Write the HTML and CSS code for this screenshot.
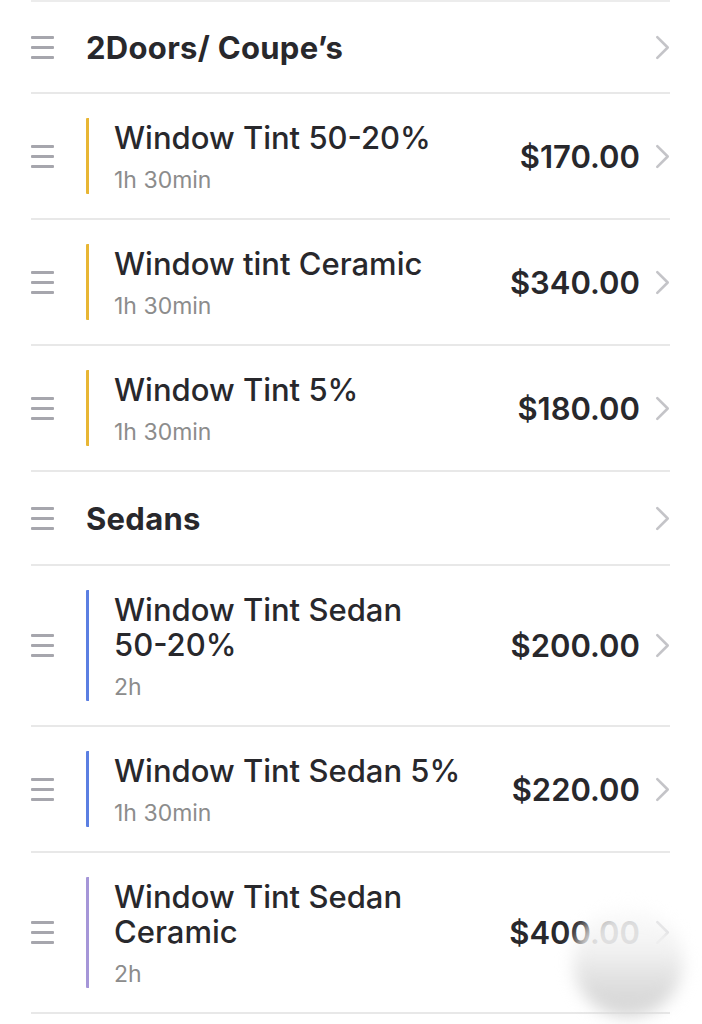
FILE: index.html
```html
<!DOCTYPE html>
<html>
<head>
<meta charset="utf-8">
<link rel="stylesheet" href="styles.css">
</head>
<body>
<div class="list">
  <div class="row cat">
    <span class="handle"><i></i><i></i><i></i></span>
    <div class="cat-title">2Doors/ Coupe’s</div>
    <svg class="chev" viewBox="0 0 14 24"><path d="M2 2 L12 12 L2 22"/></svg>
  </div>
  <div class="row svc">
    <span class="handle"><i></i><i></i><i></i></span>
    <div class="body yellow">
      <div class="name">Window Tint 50-20%</div>
      <div class="dur">1h 30min</div>
    </div>
    <div class="price">$170.00</div>
    <svg class="chev" viewBox="0 0 14 24"><path d="M2 2 L12 12 L2 22"/></svg>
  </div>
  <div class="row svc">
    <span class="handle"><i></i><i></i><i></i></span>
    <div class="body yellow">
      <div class="name">Window tint Ceramic</div>
      <div class="dur">1h 30min</div>
    </div>
    <div class="price">$340.00</div>
    <svg class="chev" viewBox="0 0 14 24"><path d="M2 2 L12 12 L2 22"/></svg>
  </div>
  <div class="row svc">
    <span class="handle"><i></i><i></i><i></i></span>
    <div class="body yellow">
      <div class="name">Window Tint 5%</div>
      <div class="dur">1h 30min</div>
    </div>
    <div class="price">$180.00</div>
    <svg class="chev" viewBox="0 0 14 24"><path d="M2 2 L12 12 L2 22"/></svg>
  </div>
  <div class="row cat">
    <span class="handle"><i></i><i></i><i></i></span>
    <div class="cat-title">Sedans</div>
    <svg class="chev" viewBox="0 0 14 24"><path d="M2 2 L12 12 L2 22"/></svg>
  </div>
  <div class="row svc">
    <span class="handle"><i></i><i></i><i></i></span>
    <div class="body blue">
      <div class="name">Window Tint Sedan<br>50-20%</div>
      <div class="dur">2h</div>
    </div>
    <div class="price">$200.00</div>
    <svg class="chev" viewBox="0 0 14 24"><path d="M2 2 L12 12 L2 22"/></svg>
  </div>
  <div class="row svc">
    <span class="handle"><i></i><i></i><i></i></span>
    <div class="body blue">
      <div class="name">Window Tint Sedan 5%</div>
      <div class="dur">1h 30min</div>
    </div>
    <div class="price">$220.00</div>
    <svg class="chev" viewBox="0 0 14 24"><path d="M2 2 L12 12 L2 22"/></svg>
  </div>
  <div class="row svc">
    <span class="handle"><i></i><i></i><i></i></span>
    <div class="body purple">
      <div class="name">Window Tint Sedan<br>Ceramic</div>
      <div class="dur">2h</div>
    </div>
    <div class="price">$400.00</div>
    <svg class="chev" viewBox="0 0 14 24"><path d="M2 2 L12 12 L2 22"/></svg>
  </div>
</div>
<div class="fab"></div>
</body>
</html>
```
FILE: styles.css
```css
* { box-sizing: border-box; }
html, body { margin: 0; padding: 0; background: #fff; }
body {
  font-family: "Inter", "Liberation Sans", sans-serif;
  color: #28282c;
  width: 702px;
  height: 1024px;
  overflow: hidden;
}
.list {
  margin: 0 32px 0 31px;
  border-top: 2px solid #ececec;
}
.row {
  display: flex;
  align-items: center;
  border-bottom: 2px solid #e8e8e8;
}
.cat { height: 94px; }
.cat:first-child { height: 92px; }
.handle {
  width: 23px;
  display: flex;
  flex-direction: column;
  gap: 7px;
  flex: none;
  margin-right: 32px;
}
.handle i {
  display: block;
  height: 3px;
  background: #a6a6ad;
  border-radius: 1px;
}
.cat-title {
  flex: 1;
  font-weight: 700;
  font-size: 31px;
  letter-spacing: 0.3px;
}
.chev {
  width: 15px;
  height: 25px;
  flex: none;
  margin-left: 15px;
}
.chev path {
  fill: none;
  stroke: #c4c4c8;
  stroke-width: 2.5;
  stroke-linecap: round;
  stroke-linejoin: round;
}
.svc { padding: 24px 0; }
.body {
  flex: 1;
  border-left: 3px solid #e8b634;
  border-radius: 1px;
  padding-left: 25px;
  display: flex;
  flex-direction: column;
  justify-content: center;
}
.body.blue { border-left-color: #5b7fe2; }
.body.purple { border-left-color: #a596d8; }
.name {
  font-size: 31px;
  line-height: 35px;
  font-weight: 500;
  padding-top: 2px;
}
.dur {
  font-size: 23px;
  line-height: 28px;
  color: #8c8c8c;
  margin-top: 11px;
}
.price {
  font-size: 31px;
  font-weight: 600;
  flex: none;
}
.fab {
  position: absolute;
  left: 573px;
  top: 907px;
  width: 110px;
  height: 110px;
  border-radius: 50%;
  background: linear-gradient(180deg,
    rgba(252, 252, 252, 0.86) 0%,
    rgba(240, 240, 240, 0.92) 40%,
    rgba(218, 218, 218, 0.96) 75%,
    rgba(212, 212, 212, 0.96) 100%);
  filter: blur(8px);
}
```
